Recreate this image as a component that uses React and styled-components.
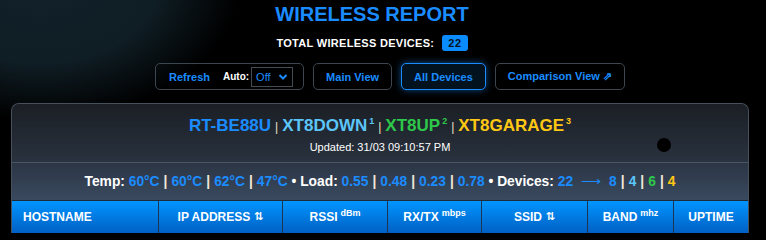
import React from 'react'
import styled, { createGlobalStyle } from 'styled-components'

const BLUE = '#1a8cff'
const SKY = '#5cc6fa'
const GREEN = '#2ec84a'
const GOLD = '#ffc814'

const GlobalStyle = createGlobalStyle`
  html, body {
    margin: 0;
    padding: 0;
    background: #000;
    font-family: "Liberation Sans", Arial, sans-serif;
  }
`

const Page = styled.div`
  position: relative;
  height: 240px;
  overflow: hidden;
  padding: 2px 17px 0 11px;
  box-sizing: border-box;
  background: radial-gradient(ellipse 200px 140px at 40px -20px, #12222b 0%, #0f1d24 60%, #000 100%);
`

const Title = styled.h1`
  margin: 0;
  padding-right: 16px;
  text-align: center;
  font-size: 20px;
  line-height: 24px;
  font-weight: bold;
  color: ${BLUE};
`

const TotalRow = styled.div`
  margin-top: 8px;
  padding-right: 16px;
  display: flex;
  justify-content: center;
  align-items: center;
  gap: 8px;
  height: 18px;
  color: #fff;
  font-size: 11px;
  font-weight: bold;
  letter-spacing: 0.3px;
`

const Badge = styled.span`
  background: #0a8cff;
  color: #06121e;
  border-radius: 3px;
  height: 16px;
  line-height: 16px;
  padding: 0 6px;
  font-size: 11px;
  letter-spacing: 0.5px;
`

const Toolbar = styled.div`
  margin-top: 11px;
  padding-left: 20px;
  display: flex;
  justify-content: center;
  gap: 9px;
`

const Button = styled.button`
  height: 27px;
  box-sizing: border-box;
  padding: 0 12px;
  display: flex;
  align-items: center;
  background: ${p => (p.$active ? '#03121f' : '#000')};
  border: 1px solid ${p => (p.$active ? BLUE : '#3c4650')};
  border-radius: 5px;
  box-shadow: ${p => (p.$active ? '0 0 7px rgba(26,140,255,0.55)' : 'none')};
  color: ${BLUE};
  font-family: inherit;
  font-size: 11px;
  font-weight: bold;
  cursor: pointer;
`

const RefreshGroup = styled.div`
  height: 27px;
  box-sizing: border-box;
  padding: 0 10px 0 13px;
  display: flex;
  align-items: center;
  border: 1px solid #3c4650;
  border-radius: 5px;
  color: ${BLUE};
  font-size: 11px;
  font-weight: bold;
`

const AutoLabel = styled.span`
  margin-left: 13px;
  color: #fff;
  font-size: 10px;
  font-weight: bold;
`

const Select = styled.div`
  margin-left: 2px;
  width: 42px;
  height: 20px;
  box-sizing: border-box;
  border: 1px solid #454b52;
  display: flex;
  align-items: center;
  justify-content: space-between;
  padding: 0 4px 0 4px;
  color: ${BLUE};
  font-size: 11px;
  font-weight: normal;
`

const Panel = styled.div`
  position: relative;
  margin-top: 13px;
  border: 1px solid #48515b;
  border-bottom: none;
  border-radius: 8px 8px 0 0;
  overflow: hidden;
  background: #1e2229;
`

const PanelHead = styled.div`
  padding: 12px 0 8px;
  text-align: center;
  background: linear-gradient(#1b1f25, #29323f);
  border-bottom: 1px solid #4a5565;
`

const Nodes = styled.div`
  font-size: 17px;
  line-height: 20px;
  height: 20px;
  font-weight: bold;
`

const Node = styled.span`
  color: ${p => p.$color};
  sup {
    font-size: 9px;
    line-height: 0;
    vertical-align: 7px;
    margin-left: 2px;
  }
`

const Pipe = styled.span`
  margin: 0 4px;
  font-size: 12px;
  line-height: 0;
  font-weight: normal;
  color: #efe2c8;
`

const Updated = styled.div`
  margin-top: 4px;
  color: #fff;
  font-size: 11px;
  line-height: 14px;
`

const Dot = styled.span`
  position: absolute;
  left: 645px;
  top: 34px;
  width: 14px;
  height: 14px;
  border-radius: 50%;
  background: #000;
`

const Stats = styled.div`
  padding: 10px 0;
  text-align: center;
  font-size: 13.8px;
  line-height: 17px;
  font-weight: bold;
  color: #fff;
  background: linear-gradient(#2b3544, #3a4a5f);
  border-bottom: 1px solid #1c2a3a;
`

const Val = styled.span`
  color: ${p => p.$color || BLUE};
`

const Bar = styled.span`
  color: #f2e8d8;
  margin: 0 4px;
`

const Arrow = styled.span`
  color: ${BLUE};
  margin: 0 8px;
  font-weight: normal;
`

const TableHead = styled.div`
  display: grid;
  grid-template-columns: 146px 124px 105px 94px 106px 86px 1fr;
  height: 32px;
  background: linear-gradient(#0095ff, #0060c4);
`

const Th = styled.div`
  display: flex;
  align-items: center;
  justify-content: ${p => (p.$left ? 'flex-start' : 'center')};
  padding-left: ${p => (p.$left ? '11px' : '0')};
  border-left: ${p => (p.$left ? 'none' : '1px solid #1d3550')};
  color: #fff;
  font-size: 12px;
  font-weight: bold;
`

const Label = styled.span`
  line-height: 14px;
  sup {
    font-size: 9px;
    line-height: 0;
    margin-left: 3px;
    vertical-align: 5px;
  }
`

const Sort = styled.span`
  margin-left: 4px;
  font-size: 11px;
  vertical-align: 1px;
  font-family: "DejaVu Sans", sans-serif;
`

export default function App() {
  return (
    <>
      <GlobalStyle />
      <Page>
        <Title>WIRELESS REPORT</Title>
        <TotalRow>
          TOTAL WIRELESS DEVICES: <Badge>22</Badge>
        </TotalRow>
        <Toolbar>
          <RefreshGroup>
            Refresh
            <AutoLabel>Auto:</AutoLabel>
            <Select>
              Off
              <svg width="10" height="8" viewBox="0 0 10 8">
                <path d="M1.5 2 L5 5.5 L8.5 2" stroke={BLUE} strokeWidth="2" fill="none" />
              </svg>
            </Select>
          </RefreshGroup>
          <Button>Main View</Button>
          <Button $active>All Devices</Button>
          <Button>Comparison View ⇗</Button>
        </Toolbar>
        <Panel>
          <PanelHead>
            <Nodes>
              <Node $color={BLUE}>RT-BE88U</Node>
              <Pipe>|</Pipe>
              <Node $color={SKY}>XT8DOWN<sup>1</sup></Node>
              <Pipe>|</Pipe>
              <Node $color={GREEN}>XT8UP<sup>2</sup></Node>
              <Pipe>|</Pipe>
              <Node $color={GOLD}>XT8GARAGE<sup>3</sup></Node>
            </Nodes>
            <Updated>Updated: 31/03 09:10:57 PM</Updated>
          </PanelHead>
          <Dot />
          <Stats>
            Temp: <Val>60°C</Val><Bar>|</Bar><Val>60°C</Val><Bar>|</Bar><Val>62°C</Val><Bar>|</Bar><Val>47°C</Val>
            {' • '}Load: <Val>0.55</Val><Bar>|</Bar><Val>0.48</Val><Bar>|</Bar><Val>0.23</Val><Bar>|</Bar><Val>0.78</Val>
            {' • '}Devices: <Val>22</Val>
            <Arrow>⟶</Arrow>
            <Val>8</Val><Bar>|</Bar><Val $color={SKY}>4</Val><Bar>|</Bar><Val $color={GREEN}>6</Val><Bar>|</Bar><Val $color={GOLD}>4</Val>
          </Stats>
          <TableHead>
            <Th $left><Label>HOSTNAME</Label></Th>
            <Th><Label>IP ADDRESS<Sort>⇅</Sort></Label></Th>
            <Th><Label>RSSI<sup>dBm</sup></Label></Th>
            <Th><Label>RX/TX<sup>mbps</sup></Label></Th>
            <Th><Label>SSID<Sort>⇅</Sort></Label></Th>
            <Th><Label>BAND<sup>mhz</sup></Label></Th>
            <Th><Label>UPTIME</Label></Th>
          </TableHead>
        </Panel>
      </Page>
    </>
  )
}
